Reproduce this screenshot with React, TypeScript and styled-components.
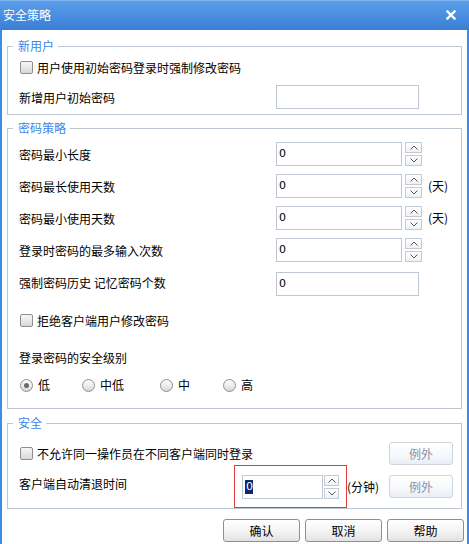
import React from "react";
import styled, { createGlobalStyle } from "styled-components";

const GlobalStyle = createGlobalStyle`
  html, body { margin: 0; padding: 0; background: #fff; }
  body {
    font-family: "Noto Sans CJK SC", "Noto Sans", sans-serif;
    font-size: 12px;
    line-height: 14px;
    color: #000;
  }
  * { box-sizing: border-box; }
`;

const Window = styled.div`
  width: 469px;
  height: 544px;
  overflow: hidden;
  display: flex;
  flex-direction: column;
  background: #fff;
`;

const TitleBar = styled.div`
  height: 30px;
  flex: none;
  display: flex;
  align-items: center;
  justify-content: space-between;
  padding: 0 13px 1px 3px;
  background: linear-gradient(#5b9eea, #3a7ed6);
  border-top: 1px solid #7fb4f0;
  color: #fff;
`;

const Title = styled.span`
  font-size: 12px;
  letter-spacing: 0;
`;

const CloseIcon = styled.svg`
  display: block;
`;

const Body = styled.div`
  flex: 1;
  display: flex;
  flex-direction: column;
  border-left: 2px solid #3d8ce8;
  border-right: 2px solid #3d8ce8;
  padding: 16px 5px 0;
`;

const Group = styled.div<{ $mt: number; $pt: number; $pb: number; $pr?: number }>`
  position: relative;
  border: 1px solid #bcc7d1;
  margin-top: ${(p) => p.$mt}px;
  padding: ${(p) => p.$pt}px ${(p) => p.$pr ?? 0}px ${(p) => p.$pb}px 11px;
  display: flex;
  flex-direction: column;
`;

const Legend = styled.span`
  position: absolute;
  top: -8px;
  left: 5px;
  padding: 0 4px 0 5px;
  background: #fff;
  color: #3d86e8;
  line-height: 14px;
`;

const CheckRow = styled.label<{ $mt?: number }>`
  display: flex;
  align-items: center;
  gap: 4px;
  height: 13px;
  margin-top: ${(p) => p.$mt ?? 0}px;
`;

const CheckBox = styled.span`
  width: 13px;
  height: 13px;
  margin-left: 1px;
  flex: none;
  border: 1px solid #8e8e8e;
  border-radius: 2px;
  background: linear-gradient(#f7f7f7, #e6e6e6 55%, #d9d9d9);
`;

const FieldRow = styled.div<{ $mt?: number }>`
  display: grid;
  grid-template-columns: 257px auto;
  align-items: center;
  height: 24px;
  margin-top: ${(p) => p.$mt ?? 0}px;
`;

const Label = styled.span<{ $shift?: number }>`
  padding-top: ${(p) => Math.max(0, (p.$shift ?? 0) * 2)}px;
  padding-bottom: ${(p) => Math.max(0, -(p.$shift ?? 0) * 2)}px;
`;

const Spin = styled.div`
  display: flex;
  align-items: center;
`;

const TextBox = styled.div<{ $w: number }>`
  width: ${(p) => p.$w}px;
  height: 24px;
  border: 1px solid #bfc8d2;
  padding: 0 2px;
  display: flex;
  align-items: center;
  font-family: "DejaVu Sans", "Noto Sans CJK SC", sans-serif;
  font-size: 11px;
  background: #fff;
`;

const Selected = styled.span`
  background: #0c2870;
  color: #fff;
  padding: 0 0 0 1px;
  line-height: 14px;
`;

const SpinButtons = styled.div<{ $gap: number; $w: number }>`
  margin-left: ${(p) => p.$gap}px;
  width: ${(p) => p.$w}px;
  height: 24px;
  display: flex;
  flex-direction: column;
  justify-content: space-between;
`;

const SpinButton = styled.div`
  height: 11px;
  border: 1px solid #c3ccd5;
  background: linear-gradient(#ffffff, #eef1f5);
  display: flex;
  align-items: center;
  justify-content: center;
`;

const Unit = styled.span<{ $ml: number }>`
  margin-left: ${(p) => p.$ml}px;
`;

const Heading = styled.div<{ $mt: number }>`
  margin-top: ${(p) => p.$mt}px;
  height: 14px;
`;

const RadioRow = styled.div<{ $mt: number }>`
  display: grid;
  grid-template-columns: 62px 78px 63px auto;
  height: 13px;
  margin-top: ${(p) => p.$mt}px;
  padding-left: 1px;
`;

const RadioOption = styled.label`
  display: flex;
  align-items: center;
  gap: 5px;
`;

const RadioDot = styled.span<{ $on?: boolean }>`
  width: 13px;
  height: 13px;
  flex: none;
  border-radius: 50%;
  border: 1px solid #8f9090;
  background: linear-gradient(#fafafa, #f0f0f0 45%, #d6d6d6);
  display: flex;
  align-items: center;
  justify-content: center;
  &::after {
    content: "";
    display: ${(p) => (p.$on ? "block" : "none")};
    width: 5px;
    height: 5px;
    border-radius: 50%;
    background: #6a6a6a;
  }
`;

const SafeRow = styled.div<{ $h: number }>`
  display: flex;
  align-items: center;
  height: ${(p) => p.$h}px;
`;

const RowLabel = styled.span`
  width: 215px;
  flex: none;
  padding-bottom: 6px;
`;

const Highlight = styled.div`
  border: 1px solid #e23a3a;
  padding: 9px 7px 8px;
  display: flex;
  align-items: center;
`;

const GhostButton = styled.button`
  margin-left: auto;
  width: 64px;
  height: 23px;
  border: 1px solid #cfd5dd;
  border-radius: 3px;
  background: linear-gradient(#ffffff, #f6f8fb 60%, #e9eef5);
  color: #8792a5;
  font: inherit;
  padding: 0;
`;

const ButtonBar = styled.div`
  display: flex;
  justify-content: flex-end;
  gap: 5px;
  margin-top: 10px;
  margin-right: -2px;
`;

const DialogButton = styled.button`
  width: 77px;
  height: 23px;
  border: 1px solid #8f8f8f;
  border-radius: 3px;
  background: linear-gradient(#ffffff, #f3f3f3 55%, #e2e2e2);
  color: #000;
  font: inherit;
  padding: 0;
`;

const Chevron = ({ up }: { up?: boolean }) => (
  <svg width="8" height="5" viewBox="0 0 8 5">
    <polyline
      points={up ? "0.5,4.5 4,1 7.5,4.5" : "0.5,0.5 4,4 7.5,0.5"}
      fill="none"
      stroke="#555"
      strokeWidth="1"
    />
  </svg>
);

const SpinControl = ({
  width,
  gap,
  btnW,
  selected,
}: {
  width: number;
  gap: number;
  btnW: number;
  selected?: boolean;
}) => (
  <Spin>
    <TextBox $w={width}>{selected ? <Selected>0</Selected> : "0"}</TextBox>
    <SpinButtons $gap={gap} $w={btnW}>
      <SpinButton>
        <Chevron up />
      </SpinButton>
      <SpinButton>
        <Chevron />
      </SpinButton>
    </SpinButtons>
  </Spin>
);

export default function App() {
  return (
    <>
      <GlobalStyle />
      <Window>
        <TitleBar>
          <Title>安全策略</Title>
          <CloseIcon width="10" height="10" viewBox="0 0 10 10">
            <path d="M1.5 1.5 L8.5 8.5 M8.5 1.5 L1.5 8.5" stroke="#fff" strokeWidth="2.4" strokeLinecap="square" />
          </CloseIcon>
        </TitleBar>
        <Body>
          <Group $mt={0} $pt={14} $pb={5}>
            <Legend>新用户</Legend>
            <CheckRow>
              <CheckBox />
              <span>用户使用初始密码登录时强制修改密码</span>
            </CheckRow>
            <FieldRow $mt={11}>
              <Label $shift={1}>新增用户初始密码</Label>
              <TextBox $w={143} />
            </FieldRow>
          </Group>

          <Group $mt={13} $pt={13} $pb={17}>
            <Legend>密码策略</Legend>
            <FieldRow>
              <Label $shift={1}>密码最小长度</Label>
              <SpinControl width={126} gap={3} btnW={17} />
            </FieldRow>
            <FieldRow $mt={8}>
              <Label $shift={1}>密码最长使用天数</Label>
              <Spin>
                <SpinControl width={126} gap={3} btnW={17} />
                <Unit $ml={6}>(天)</Unit>
              </Spin>
            </FieldRow>
            <FieldRow $mt={8}>
              <Label $shift={1}>密码最小使用天数</Label>
              <Spin>
                <SpinControl width={126} gap={3} btnW={17} />
                <Unit $ml={6}>(天)</Unit>
              </Spin>
            </FieldRow>
            <FieldRow $mt={8}>
              <Label $shift={1}>登录时密码的最多输入次数</Label>
              <SpinControl width={126} gap={3} btnW={17} />
            </FieldRow>
            <FieldRow $mt={10}>
              <Label $shift={-1}>强制密码历史 记忆密码个数</Label>
              <TextBox $w={143}>0</TextBox>
            </FieldRow>
            <CheckRow $mt={18}>
              <CheckBox />
              <span>拒绝客户端用户修改密码</span>
            </CheckRow>
            <Heading $mt={24}>登录密码的安全级别</Heading>
            <RadioRow $mt={13}>
              <RadioOption>
                <RadioDot $on />
                <span>低</span>
              </RadioOption>
              <RadioOption>
                <RadioDot />
                <span>中低</span>
              </RadioOption>
              <RadioOption>
                <RadioDot />
                <span>中</span>
              </RadioOption>
              <RadioOption>
                <RadioDot />
                <span>高</span>
              </RadioOption>
            </RadioRow>
          </Group>

          <Group $mt={14} $pt={18} $pb={0} $pr={8}>
            <Legend>安全</Legend>
            <SafeRow $h={23}>
              <CheckRow>
                <CheckBox />
                <span>不允许同一操作员在不同客户端同时登录</span>
              </CheckRow>
              <GhostButton>例外</GhostButton>
            </SafeRow>
            <SafeRow $h={43}>
              <RowLabel>客户端自动清退时间</RowLabel>
              <Highlight>
                <SpinControl width={81} gap={1} btnW={15} selected />
              </Highlight>
              <span>(分钟)</span>
              <GhostButton>例外</GhostButton>
            </SafeRow>
          </Group>

          <ButtonBar>
            <DialogButton>确认</DialogButton>
            <DialogButton>取消</DialogButton>
            <DialogButton>帮助</DialogButton>
          </ButtonBar>
        </Body>
      </Window>
    </>
  );
}
